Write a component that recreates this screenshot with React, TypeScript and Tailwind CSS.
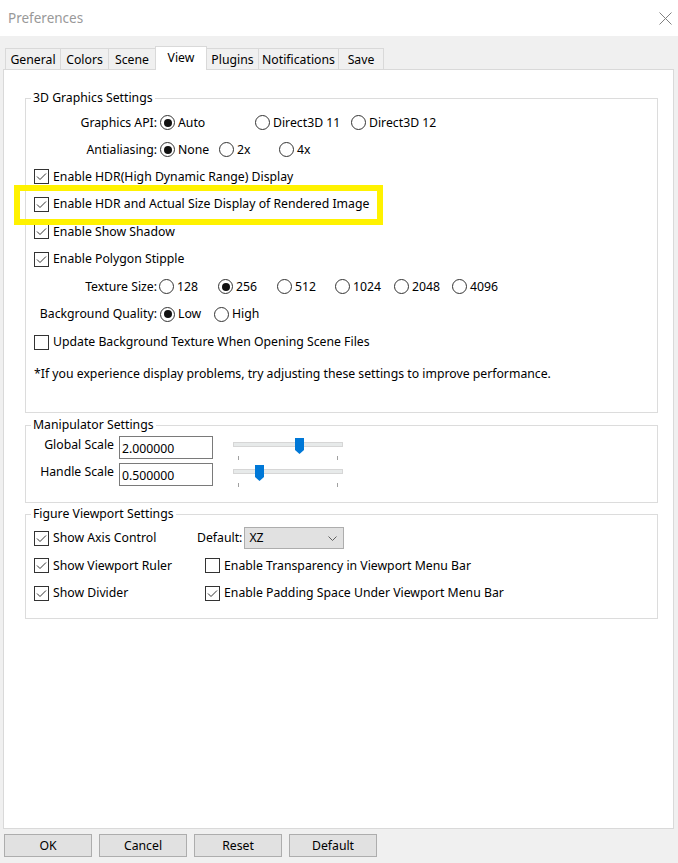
import type { ReactNode } from 'react'

function CheckBox(props: { checked: boolean }) {
  return (
    <span className="flex h-[15px] w-[15px] shrink-0 items-center justify-center border border-[#333333] bg-white">
      {props.checked ? (
        <svg width="13" height="13" viewBox="0 0 13 13">
          <path d="M2 6.5 L5 9.5 L11 3.5" fill="none" stroke="#333333" strokeWidth="1" />
        </svg>
      ) : null}
    </span>
  )
}

function Radio(props: { checked?: boolean; label: string; className?: string }) {
  return (
    <span className={['flex items-center', props.className || ''].join(' ')}>
      <span className="flex h-[15px] w-[15px] shrink-0 items-center justify-center rounded-full border border-[#333333] bg-white">
        {props.checked ? <span className="h-[8px] w-[8px] rounded-full bg-[#111111]" /> : null}
      </span>
      <span className="ml-[3px]">{props.label}</span>
    </span>
  )
}

function Check(props: { checked: boolean; label: string; className?: string }) {
  return (
    <span className={['flex items-center', props.className || ''].join(' ')}>
      <CheckBox checked={props.checked} />
      <span className="ml-[4px] whitespace-nowrap">{props.label}</span>
    </span>
  )
}

function Group(props: { title: string; className?: string; children: ReactNode }) {
  return (
    <fieldset className={['border border-[#dcdcdc] pl-[8px]', props.className || ''].join(' ')}>
      <legend className="ml-[-3px] px-[2px] leading-[16px]">{props.title}</legend>
      {props.children}
    </fieldset>
  )
}

function Label(props: { children: ReactNode }) {
  return <span className="w-[123px] shrink-0 text-right">{props.children}</span>
}

function Slider(props: { thumb: string }) {
  return (
    <div className="relative ml-[20px] h-[26px] w-[110px]">
      <div className="absolute left-0 right-0 top-[6px] h-[5px] border border-[#d6d6d6] bg-[#e7eaea]" />
      <svg className={['absolute top-[2px]', props.thumb].join(' ')} width="9" height="16" viewBox="0 0 9 16">
        <path d="M0 0H9V12L4.5 16L0 12Z" fill="#0078d7" />
      </svg>
      <div className="absolute left-[5px] top-[20px] h-[4px] w-px bg-[#a0a0a0]" />
      <div className="absolute right-[5px] top-[20px] h-[4px] w-px bg-[#a0a0a0]" />
    </div>
  )
}

const tabs = [
  { name: 'General', w: 'w-[56px]' },
  { name: 'Colors', w: 'w-[49px]' },
  { name: 'Scene', w: 'w-[48px]' },
  { name: 'View', w: 'w-[52px]' },
  { name: 'Plugins', w: 'w-[53px]' },
  { name: 'Notifications', w: 'w-[81px]' },
  { name: 'Save', w: 'w-[46px]' },
]

export default function App() {
  return (
    <div className="flex h-[863px] w-[678px] flex-col bg-[#f0f0f0] font-['Noto_Sans','Open_Sans',sans-serif] text-[12.25px] leading-[16px] text-black">
      {/* title bar */}
      <div className="flex h-[36px] shrink-0 items-center justify-between bg-white pl-[8px] pr-[6px]">
        <span className="text-[13.5px] text-[#999999]">Preferences</span>
        <svg width="13" height="13" viewBox="0 0 13 13">
          <path d="M0.5 0.5 L12.5 12.5 M12.5 0.5 L0.5 12.5" stroke="#808080" strokeWidth="1" />
        </svg>
      </div>

      {/* tabs */}
      <div className="relative z-10 mt-[10px] flex items-end pl-[5px]">
        {tabs.map((t, i) =>
          t.name === 'View' ? (
            <div
              key={t.name}
              className={[t.w, '-mb-px -ml-px flex h-[24px] items-center justify-center border border-b-0 border-[#d9d9d9] bg-white pb-[2px]'].join(' ')}
            >
              {t.name}
            </div>
          ) : (
            <div
              key={t.name}
              className={[t.w, i > 0 ? '-ml-px' : '', 'flex h-[21px] items-center justify-center border border-b-0 border-[#d9d9d9] bg-[#f0f0f0] pt-[1px]'].join(' ')}
            >
              {t.name}
            </div>
          ),
        )}
      </div>

      {/* panel */}
      <div className="ml-[3px] mr-[4px] flex-1 border border-[#d9d9d9] bg-white pl-[21px] pr-[15px] pt-[20px]">
        <Group title="3D Graphics Settings" className="pb-[20px]">
          <div className="flex flex-col pt-[3px]">
            <div className="flex h-[27px] items-center">
              <Label>Graphics API:</Label>
              <Radio checked label="Auto" className="ml-[3px] w-[95px]" />
              <Radio label="Direct3D 11" className="w-[96px]" />
              <Radio label="Direct3D 12" />
            </div>
            <div className="flex h-[27px] items-center">
              <Label>Antialiasing:</Label>
              <Radio checked label="None" className="ml-[3px] w-[59px]" />
              <Radio label="2x" className="w-[60px]" />
              <Radio label="4x" />
            </div>
            <div className="flex h-[27px] items-center">
              <Check checked label="Enable HDR(High Dynamic Range) Display" />
            </div>
            <div className="relative flex h-[28px] items-center">
              <Check checked label="Enable HDR and Actual Size Display of Rendered Image" />
              <div className="pointer-events-none absolute left-[-20px] top-[-5px] h-[40px] w-[369px] border-[6px] border-[#fff200]" />
            </div>
            <div className="flex h-[27px] items-center">
              <Check checked label="Enable Show Shadow" />
            </div>
            <div className="flex h-[28px] items-center">
              <Check checked label="Enable Polygon Stipple" />
            </div>
            <div className="flex h-[27px] items-center">
              <Label>Texture Size:</Label>
              <Radio label="128" className="ml-[2px] w-[59px]" />
              <Radio checked label="256" className="w-[59px]" />
              <Radio label="512" className="w-[58px]" />
              <Radio label="1024" className="w-[59px]" />
              <Radio label="2048" className="w-[58px]" />
              <Radio label="4096" />
            </div>
            <div className="flex h-[28px] items-center">
              <Label>Background Quality:</Label>
              <Radio checked label="Low" className="ml-[3px] w-[54px]" />
              <Radio label="High" />
            </div>
            <div className="flex h-[28px] items-center">
              <Check checked={false} label="Update Background Texture When Opening Scene Files" />
            </div>
            <div className="flex h-[36px] items-center whitespace-nowrap">
              *If you experience display problems, try adjusting these settings to improve performance.
            </div>
          </div>
        </Group>

        <Group title="Manipulator Settings" className="mt-[4px] pb-[16px]">
          <div className="flex flex-col gap-[4px] pt-[3px]">
            {[
              { label: 'Global Scale', value: '2.000000', thumb: 'left-[62px]' },
              { label: 'Handle Scale', value: '0.500000', thumb: 'left-[22px]' },
            ].map((r) => (
              <div key={r.label} className="flex h-[23px] items-start">
                <span className="w-[80px] shrink-0 pt-[1px] text-right">{r.label}</span>
                <div className="ml-[5px] flex h-[23px] w-[94px] items-center border border-[#7a7a7a] bg-white px-[2px] pt-[2px]">
                  {r.value}
                </div>
                <Slider thumb={r.thumb} />
              </div>
            ))}
          </div>
        </Group>

        <Group title="Figure Viewport Settings" className="mt-[3px] pb-[11px]">
          <div className="flex flex-col pt-[2px]">
            <div className="flex h-[28px] items-center">
              <Check checked label="Show Axis Control" className="w-[163px]" />
              <span>Default:</span>
              <div className="ml-[2px] flex h-[22px] w-[100px] items-center justify-between border border-[#adadad] bg-[#e1e1e1] pl-[4px] pr-[6px]">
                <span>XZ</span>
                <svg width="9" height="5" viewBox="0 0 9 5">
                  <path d="M0.5 0.5 L4.5 4.5 L8.5 0.5" fill="none" stroke="#606060" strokeWidth="1" />
                </svg>
              </div>
            </div>
            <div className="flex h-[27px] items-center">
              <Check checked label="Show Viewport Ruler" className="w-[171px]" />
              <Check checked={false} label="Enable Transparency in Viewport Menu Bar" />
            </div>
            <div className="flex h-[28px] items-center">
              <Check checked label="Show Divider" className="w-[171px]" />
              <Check checked label="Enable Padding Space Under Viewport Menu Bar" />
            </div>
          </div>
        </Group>
      </div>

      {/* buttons */}
      <div className="flex h-[34px] shrink-0 gap-[7px] px-[4px] pt-[5px]">
        {['OK', 'Cancel', 'Reset', 'Default'].map((b) => (
          <button
            key={b}
            type="button"
            className="flex h-[23px] w-[88px] items-center justify-center border border-[#adadad] bg-[#e1e1e1]"
          >
            {b}
          </button>
        ))}
      </div>
    </div>
  )
}
